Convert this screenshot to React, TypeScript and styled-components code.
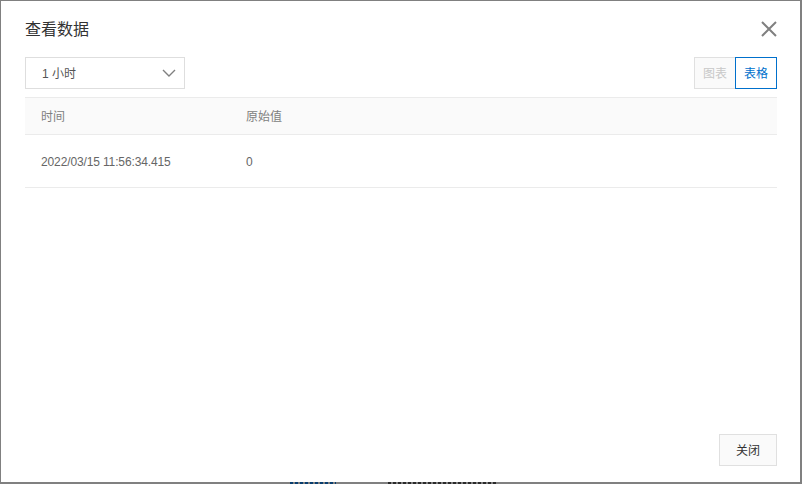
import React from 'react';
import styled, { createGlobalStyle } from 'styled-components';

const GlobalStyle = createGlobalStyle`
  html, body {
    margin: 0;
    padding: 0;
    width: 802px;
    height: 484px;
    overflow: hidden;
    background: #808080;
    font-family: "Liberation Sans", "Noto Sans CJK SC", sans-serif;
  }
`;

const rows = [{ time: '2022/03/15 11:56:34.415', value: '0' }];

const App: React.FC = () => (
  <>
    <GlobalStyle />
    <S.Backdrop>
      <S.BehindMark $left={290} $width={46} $color="#0a3f70" />
      <S.BehindMark $left={388} $width={108} $color="#2a2a2a" />
      <S.Dialog>
        <S.Header>
          <S.Title>查看数据</S.Title>
          <S.Close aria-label="close">
            <svg width="16" height="16" viewBox="0 0 16 16" fill="none" stroke="#808080" strokeWidth="2">
              <path d="M1 1l14 14M15 1L1 15" />
            </svg>
          </S.Close>
        </S.Header>
        <S.Toolbar>
          <S.Select>
            <S.SelectValue>1 小时</S.SelectValue>
            <svg width="14" height="8" viewBox="0 0 14 8" fill="none" stroke="#808080" strokeWidth="1.4">
              <path d="M1 1l6 6 6-6" />
            </svg>
          </S.Select>
          <S.Toggle>
            <S.ToggleButton>图表</S.ToggleButton>
            <S.ToggleButton $active>表格</S.ToggleButton>
          </S.Toggle>
        </S.Toolbar>
        <S.TableHead>
          <S.TimeCell>时间</S.TimeCell>
          <S.ValueCell>原始值</S.ValueCell>
        </S.TableHead>
        {rows.map(row => (
          <S.TableRow key={row.time}>
            <S.TimeCell>{row.time}</S.TimeCell>
            <S.ValueCell>{row.value}</S.ValueCell>
          </S.TableRow>
        ))}
        <S.Footer>
          <S.CloseButton>关闭</S.CloseButton>
        </S.Footer>
      </S.Dialog>
    </S.Backdrop>
  </>
);

const S = {
  Backdrop: styled.div`
    position: relative;
    width: 802px;
    height: 484px;
    overflow: hidden;
  `,
  BehindMark: styled.div<{ $left: number; $width: number; $color: string }>`
    position: absolute;
    top: 482px;
    left: ${({ $left }) => $left}px;
    width: ${({ $width }) => $width}px;
    height: 2px;
    background: repeating-linear-gradient(
      90deg,
      ${({ $color }) => $color} 0 3px,
      transparent 3px 5px
    );
  `,
  Dialog: styled.div`
    position: relative;
    box-sizing: border-box;
    width: 799px;
    height: 481px;
    margin: 1px 0 0 1px;
    padding: 0 23px 16px 24px;
    background: #fff;
    display: flex;
    flex-direction: column;
    color: #333;
  `,
  Header: styled.div`
    height: 56px;
    display: flex;
    align-items: center;
    justify-content: space-between;
    padding-bottom: 2px;
    box-sizing: border-box;
  `,
  Title: styled.h3`
    margin: 0;
    font-size: 16px;
    font-weight: 400;
    color: #333;
  `,
  Close: styled.button`
    border: 0;
    padding: 0;
    margin-top: 2px;
    background: none;
    display: flex;
  `,
  Toolbar: styled.div`
    display: flex;
    justify-content: space-between;
    align-items: center;
    height: 32px;
    margin-bottom: 8px;
  `,
  Select: styled.div`
    box-sizing: border-box;
    width: 160px;
    height: 32px;
    border: 1px solid #dedede;
    padding: 0 8px 0 16px;
    display: flex;
    align-items: center;
    justify-content: space-between;
    font-size: 12px;
    color: #555;
  `,
  SelectValue: styled.span`
    padding-bottom: 2px;
  `,
  Toggle: styled.div`
    display: flex;
  `,
  ToggleButton: styled.div<{ $active?: boolean }>`
    box-sizing: border-box;
    height: 32px;
    width: ${({ $active }) => ($active ? '42px' : '41px')};
    padding-bottom: 2px;
    display: flex;
    align-items: center;
    justify-content: center;
    font-size: 12px;
    background: ${({ $active }) => ($active ? '#fff' : '#fafafa')};
    color: ${({ $active }) => ($active ? '#0070cc' : '#c8c8c8')};
    border: 1px solid ${({ $active }) => ($active ? '#0070cc' : '#e0e0e0')};
    ${({ $active }) => (!$active ? 'border-right: 0;' : '')}
  `,
  TableHead: styled.div`
    box-sizing: border-box;
    height: 38px;
    padding-bottom: 2px;
    background: #fafafa;
    border-top: 1px solid #ebebeb;
    border-bottom: 1px solid #ebebeb;
    display: flex;
    align-items: center;
    font-size: 12px;
    color: #808080;
  `,
  TableRow: styled.div`
    box-sizing: border-box;
    height: 53px;
    padding-top: 2px;
    border-bottom: 1px solid #ebebeb;
    display: flex;
    align-items: center;
    font-size: 12px;
    letter-spacing: -0.13px;
    color: #666;
  `,
  TimeCell: styled.div`
    width: 221px;
    padding-left: 16px;
    box-sizing: border-box;
  `,
  ValueCell: styled.div`
    flex: 1;
  `,
  Footer: styled.div`
    margin-top: auto;
    display: flex;
    justify-content: flex-end;
  `,
  CloseButton: styled.button`
    box-sizing: border-box;
    width: 58px;
    height: 32px;
    padding: 0 0 2px;
    background: #fafafa;
    border: 1px solid #e0e0e0;
    font: inherit;
    font-size: 12px;
    color: #333;
  `,
};

export default App;
